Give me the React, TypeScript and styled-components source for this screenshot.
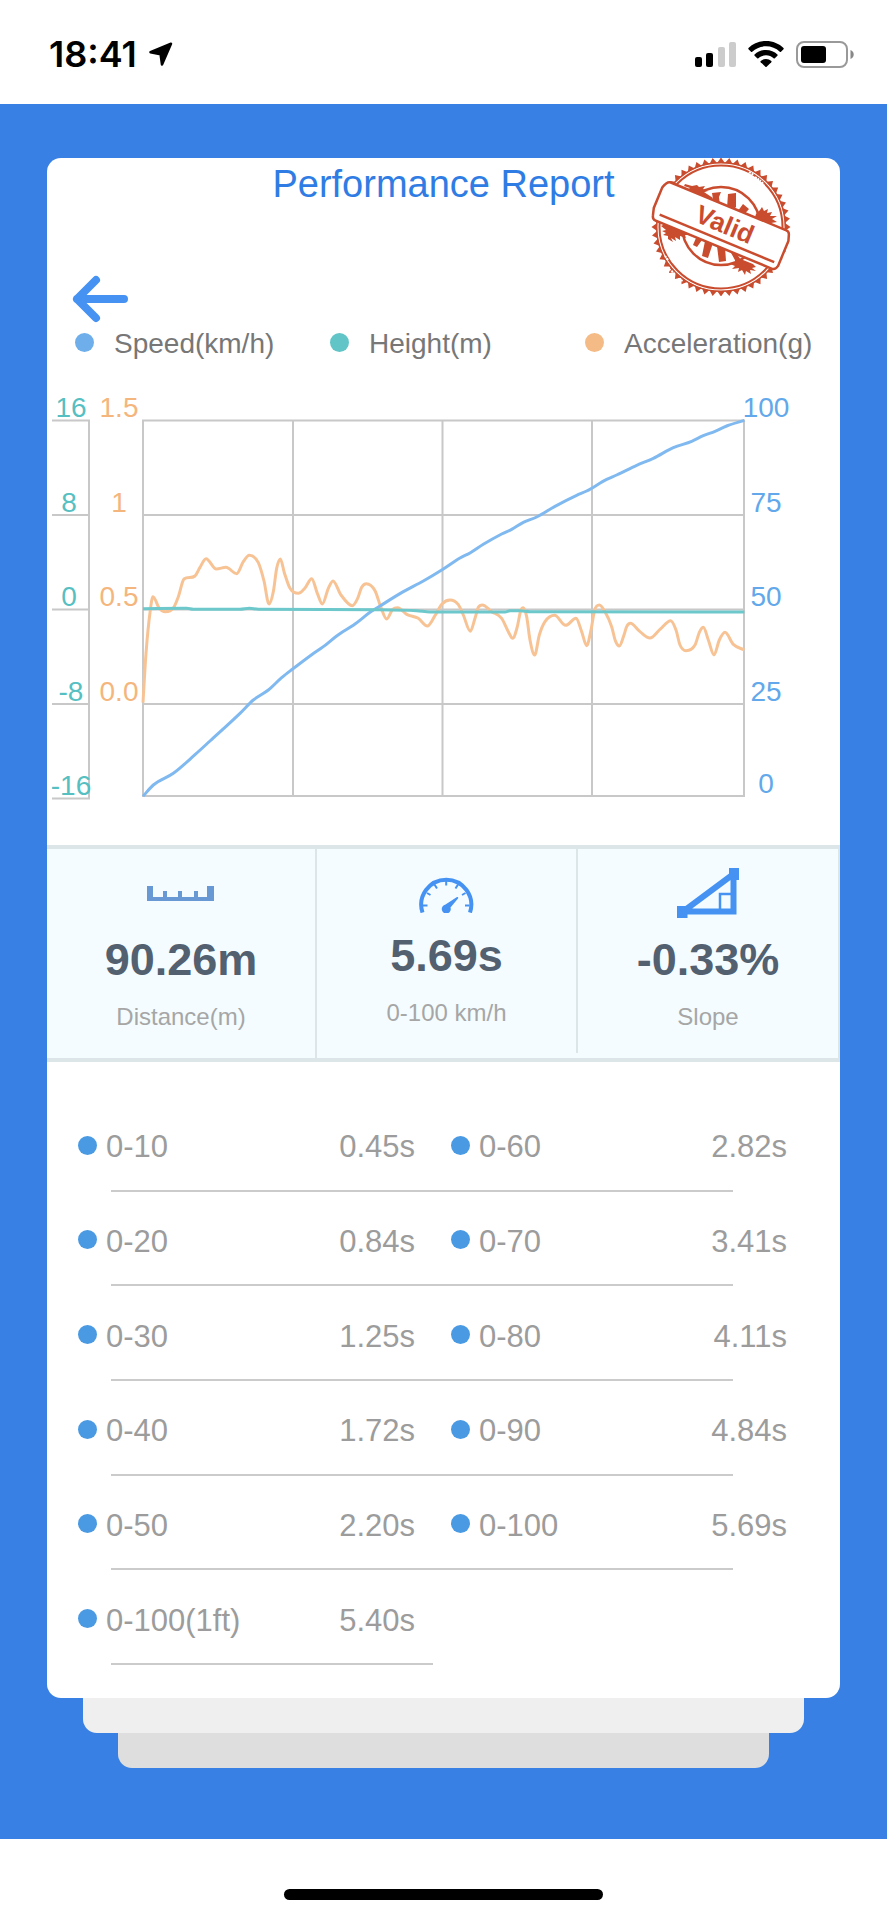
import React from "react";
import styled, { createGlobalStyle } from "styled-components";

type Point = [number, number];

type Split = { label: string; time: string };

const legend = [
  { label: "Speed(km/h)", color: "#6eaeeb" },
  { label: "Height(m)", color: "#61c4c7" },
  { label: "Acceleration(g)", color: "#f4bb86" },
];

const splits: [Split, Split | null][] = [
  [{ label: "0-10", time: "0.45s" }, { label: "0-60", time: "2.82s" }],
  [{ label: "0-20", time: "0.84s" }, { label: "0-70", time: "3.41s" }],
  [{ label: "0-30", time: "1.25s" }, { label: "0-80", time: "4.11s" }],
  [{ label: "0-40", time: "1.72s" }, { label: "0-90", time: "4.84s" }],
  [{ label: "0-50", time: "2.20s" }, { label: "0-100", time: "5.69s" }],
  [{ label: "0-100(1ft)", time: "5.40s" }, null],
];

// chart series, in units of a third of a pixel from the chart's top left
const speed: Point[] = [
  [288, 1249], [319, 1215], [379, 1180], [444, 1124], [489, 1083], [579, 1000],
  [619, 960], [664, 930], [704, 893], [737, 867], [794, 824], [829, 800],
  [869, 768], [924, 732], [969, 697], [999, 678], [1069, 635], [1129, 603],
  [1189, 567], [1239, 534], [1269, 519], [1309, 493], [1364, 462], [1394, 448],
  [1429, 427], [1469, 411], [1524, 379], [1589, 346], [1619, 333], [1679, 298],
  [1709, 285], [1769, 256], [1819, 235], [1879, 203], [1934, 184], [1969, 167],
  [2004, 154], [2039, 138], [2092, 121],
];

const height: Point[] = [
  [288, 686], [419, 685], [439, 688], [579, 688], [607, 685], [634, 688],
  [989, 689], [1109, 692], [1149, 696], [1374, 696], [1389, 692], [1419, 692],
  [1449, 695], [2092, 696],
];

const acceleration: Point[] = [
  [288, 968], [297, 820], [310, 690], [318, 650], [337, 685], [355, 695],
  [379, 684], [394, 650], [411, 597], [444, 588], [459, 562], [477, 536],
  [508, 567], [537, 562], [569, 581], [589, 545], [607, 526], [634, 548],
  [651, 603], [666, 672], [679, 635], [689, 565], [700, 537], [712, 578],
  [729, 625], [754, 640], [774, 624], [794, 596], [811, 640], [826, 672],
  [844, 625], [858, 603], [882, 645], [916, 677], [932, 655], [944, 622],
  [958, 611], [984, 632], [1001, 680], [1019, 717], [1037, 688], [1052, 683],
  [1079, 703], [1114, 715], [1141, 738], [1164, 707], [1185, 672], [1209, 660],
  [1234, 674], [1249, 705], [1270, 754], [1284, 715], [1294, 682], [1306, 675],
  [1334, 695], [1364, 715], [1384, 755], [1397, 775], [1411, 740], [1421, 692],
  [1429, 683], [1439, 710], [1449, 780], [1463, 825], [1477, 765], [1494, 725],
  [1523, 706], [1556, 736], [1587, 715], [1604, 755], [1619, 797], [1632, 750],
  [1643, 690], [1657, 675], [1674, 695], [1694, 740], [1705, 782], [1717, 798],
  [1731, 765], [1739, 740], [1750, 730], [1779, 755], [1809, 774], [1839, 748],
  [1871, 722], [1887, 750], [1899, 795], [1917, 812], [1944, 795], [1958, 755],
  [1969, 742], [1984, 780], [2001, 825], [2017, 780], [2034, 757], [2059, 793],
  [2092, 810],
];

// cubic through the points, flat at every peak and dip
const smooth = (raw: Point[]) => {
  const pts = raw.map(([x, y]) => [x / 3, y / 3]);
  const slope = (i: number) =>
    (pts[i + 1][1] - pts[i][1]) / (pts[i + 1][0] - pts[i][0]);
  const tangents = pts.map((_, i) => {
    if (i === 0) return slope(0);
    if (i === pts.length - 1) return slope(i - 1);
    const a = slope(i - 1);
    const b = slope(i);
    if (a * b <= 0) return 0;
    const limit = 3 * Math.min(Math.abs(a), Math.abs(b));
    return Math.sign(a) * Math.min(Math.abs(a + b) / 2, limit);
  });
  return pts.reduce((d, [x, y], i) => {
    if (i === 0) return `M${x} ${y}`;
    const [px, py] = pts[i - 1];
    const h = (x - px) / 3;
    return `${d}C${px + h} ${py + tangents[i - 1] * h} ${x - h} ${
      y - tangents[i] * h
    } ${x} ${y}`;
  }, "");
};

const axisRows = [37, 132, 226, 321, 415];
const heightAxis = ["16", "8", "0", "-8", "-16"];
const accelerationAxis = ["1.5", "1", "0.5", "0.0"];
const speedAxis = ["100", "75", "50", "25", "0"];

const Chart: React.FC = () => (
  <ChartSvg viewBox="0 0 793 465" role="img" aria-label="Run chart">
    <g fill="none" stroke="#c8c8c8" strokeWidth="2">
      <path d="M5 40.5H42V418.5H5M5 135H42M5 229.5H42M5 324H42" />
      <path d="M96 40.5H697V416H96ZM96 135H697M96 229.5H697M96 324H697" />
      <path d="M246 40V416M395.5 40V416M545 40V416" />
    </g>
    <g fill="none" strokeWidth="3" strokeLinejoin="round">
      <path d={smooth(acceleration)} stroke="#f7c395" />
      <path d={smooth(speed)} stroke="#7fb9f0" />
      <path d={smooth(height)} stroke="#6cc8cb" />
    </g>
    <g fontSize="28" textAnchor="middle">
      {heightAxis.map((text, i) => (
        <text key={text} x={text.length > 1 ? 24 : 22} y={axisRows[i]} fill="#56bfc2">
          {text}
        </text>
      ))}
      {accelerationAxis.map((text, i) => (
        <text key={text} x="72" y={axisRows[i]} fill="#f4b67d">
          {text}
        </text>
      ))}
      {speedAxis.map((text, i) => (
        <text key={text} x="719" y={i === 4 ? 413 : axisRows[i]} fill="#62a8ea">
          {text}
        </text>
      ))}
    </g>
  </ChartSvg>
);

const teeth = Array.from({ length: 104 }, (_, i) => {
  const r = i % 2 ? 64 : 69.5;
  const a = (i * Math.PI) / 52;
  return `${(70 + r * Math.cos(a)).toFixed(1)},${(69 + r * Math.sin(a)).toFixed(1)}`;
}).join(" ");

const ValidStamp: React.FC = () => (
  <Stamp viewBox="0 0 141 138" width="141" height="138">
    <g fill="#c94c2e" stroke="none">
      <polygon points={teeth} />
      <circle cx="70" cy="69" r="64" fill="#fff" />
      <circle cx="70" cy="69" r="61.5" fill="none" stroke="#c94c2e" strokeWidth="2" />
      <circle cx="70" cy="69" r="64.3" fill="none" stroke="#c94c2e" strokeWidth="1.5" />
      <circle cx="70" cy="68" r="39" fill="none" stroke="#c94c2e" strokeWidth="2.5" />
      {/* ink smudges on both sides of the band */}
      <path d="M34 26l7 2 5-1 2 2 6-1-2 3 5 2-4 1 9 6-4 3-11-5-3 1-2-5-6-2 3-2-6-2z" />
      <path d="M105 56l4-4 2-3 2 4 4-2-1 4 5-1-2 4 7 0-5 3 5 3-6 1 4 3-5 0 2 5-8-3-11-5z" />
      <path d="M14 66l9 4 10 4 7 3-6 0 1 3-6-2 0 4-5-3 1 4-5-3 2 4-5-3 0-3-5-1 3-2-4-2 4-1-5-4z" />
      <path d="M84 101l8 1 10 4 3 3-4 1 4 3-6-1 1 4-5-3-1 4-3-5-4 2 1-4-7 1 3-3-5-2 5-2z" />
      <path d="M61 35l9-1-2 5 1 9-5 1-2-8zM77 36l8-1 0 14-4 4-5-3zM92 46l6 5-8 9-6-3zM52 43l7-3 3 8-6 0z" />
      <path d="M45 80l6 2-5 7-4-2zM54 83l8 2-5 15-6-2zM66 88l8 1 1 14-7 1zM79 93l6 2 5 7-5 2z" />
      <path
        d="M98 14l5 3M104 19l6 4M111 24l2 4M18 111l5 4M27 121l5 2M14 98l3 4"
        stroke="#fff"
        strokeWidth="2"
        strokeDasharray="2 1"
      />
    </g>
    <g transform="translate(70 68) rotate(22.5)">
      <path
        d="M-63-21H62Q65-21 66-18L68-12V15Q67 20 63 20H-63Q-66 20-67 16L-69 9V-13Q-67-21-63-21Z"
        fill="#fff"
        stroke="#c94c2e"
        strokeWidth="2.5"
      />
      <path d="M-61 13H63" stroke="#c94c2e" strokeWidth="2.5" />
      <text x="3" y="6" fill="#c94c2e" fontSize="26" fontWeight="700" textAnchor="middle">
        Valid
      </text>
    </g>
  </Stamp>
);

const RulerIcon: React.FC = () => (
  <svg width="68" height="15" viewBox="0 0 68 15" aria-hidden="true">
    <path
      d="M0 0H6V11H16V5H20V11H31V5H35V11H47V5H51V11H60V0H67V15H0Z"
      fill="#6999d5"
    />
  </svg>
);

const GaugeIcon: React.FC = () => (
  <svg width="56" height="40" viewBox="0 -4 56 40" aria-hidden="true">
    <g fill="none" stroke="#4592f3">
      <path d="M3.5 35.5A25 25 0 1 1 51 35.5" strokeWidth="4" />
      <path
        d="M4 28.500H8.500M8 16L11.500 18M15.500 7.500L18 11.500M27.200 4V8.500M39 7.500L36.500 11.500M46.500 16L43 18M50.500 28.500H46"
        strokeWidth="2"
      />
    </g>
    <path
      d="M38 20C39.5 20 39.5 21 38.8 21.8L31.5 30.5A4.5 4.5 0 1 1 26.5 27.6Z"
      fill="#4592f3"
    />
  </svg>
);

const SlopeIcon: React.FC = () => (
  <svg width="62" height="50" viewBox="0 0 62 50" aria-hidden="true">
    <path d="M6 43.5H56.5V6Z" fill="none" stroke="#4592f3" strokeWidth="6" />
    <path d="M43 42V26H55" fill="none" stroke="#4592f3" strokeWidth="2.5" />
    <path d="M52 0H62V12H52ZM0 38H10.500V50H0Z" fill="#4592f3" />
  </svg>
);

const stats = [
  { value: "90.26m", label: "Distance(m)", icon: <RulerIcon />, compact: false },
  { value: "5.69s", label: "0-100 km/h", icon: <GaugeIcon />, compact: true },
  { value: "-0.33%", label: "Slope", icon: <SlopeIcon />, compact: false },
];

const StatusIcons: React.FC = () => (
  <StatusGroup $gap={12}>
    <svg width="41" height="26" viewBox="0 0 41 26" aria-hidden="true">
      <rect x="0" y="16" width="7" height="10" rx="2" />
      <rect x="11" y="12" width="7" height="14" rx="2" />
      <rect x="23" y="6" width="7" height="20" rx="2" fill="#ccc" />
      <rect x="34" y="1" width="7" height="25" rx="2" fill="#ccc" />
    </svg>
    <svg width="36" height="26" viewBox="0 0 36 26" aria-hidden="true">
      <path d="M18 0C25 0 31.200 2.700 35.500 7Q36 7.600 35.500 8.200L33 10.700Q32.400 11.200 31.800 10.700C28 7.200 23.300 5.300 18 5.300S8 7.200 4.200 10.700Q3.600 11.200 3 10.700L.5 8.200Q0 7.600.5 7C4.800 2.700 11 0 18 0Z" />
      <path d="M18 9C22.500 9 26.500 10.700 29.400 13.500Q30 14.100 29.400 14.700L26.800 17.200Q26.200 17.700 25.600 17.200C23.500 15.300 20.900 14.200 18 14.200S12.500 15.300 10.400 17.200Q9.800 17.700 9.200 17.200L6.600 14.700Q6 14.100 6.600 13.500C9.500 10.700 13.500 9 18 9Z" />
      <path d="M18 18C20 18 21.900 18.700 23.300 20Q23.900 20.600 23.300 21.200L18.600 25.700Q18 26.200 17.400 25.700L12.700 21.200Q12.100 20.600 12.700 20C14.100 18.700 16 18 18 18Z" />
    </svg>
    <svg width="58" height="27" viewBox="0 0 58 27" aria-hidden="true">
      <rect x="1" y="1" width="50" height="25" rx="7" fill="none" stroke="#999" strokeWidth="2" />
      <rect x="5" y="5" width="25" height="17" rx="3" />
      <path d="M54.5 9C56.5 9.8 57.7 11.5 57.7 13.5S56.5 17.2 54.5 18Z" fill="#888" />
    </svg>
  </StatusGroup>
);

const App: React.FC = () => {
  return (
    <>
      <GlobalStyle />
      <StatusBar>
        <StatusGroup $gap={12}>
          <Clock>18:41</Clock>
          <svg width="24" height="25" viewBox="0 0 24 25" aria-hidden="true">
            <path
              d="M1.5 10.2L22 1.7L13 22.500L11.600 12.300Z"
              stroke="#000"
              strokeWidth="2.5"
              strokeLinejoin="round"
            />
          </svg>
        </StatusGroup>
        <StatusIcons />
      </StatusBar>
      <Page>
        <Card>
          <Title>Performance Report</Title>
          <ValidStamp />
          <BackButton type="button" aria-label="Back">
            <svg width="58" height="48" viewBox="0 0 58 48" aria-hidden="true">
              <path
                d="M53 24H6M25 5L6 24L25 43"
                fill="none"
                stroke="#4592f3"
                strokeWidth="8"
                strokeLinecap="round"
                strokeLinejoin="round"
              />
            </svg>
          </BackButton>
          <Legend>
            {legend.map((item) => (
              <LegendItem key={item.label}>
                <Dot $color={item.color} />
                {item.label}
              </LegendItem>
            ))}
          </Legend>
          <Chart />
          <Stats>
            {stats.map((stat) => (
              <Stat key={stat.label} $compact={stat.compact}>
                <StatIcon>{stat.icon}</StatIcon>
                <StatValue>{stat.value}</StatValue>
                <StatLabel>{stat.label}</StatLabel>
              </Stat>
            ))}
          </Stats>
          <SplitTable>
            <tbody>
              {splits.map(([left, right]) => (
                <tr key={left.label}>
                  <LabelCell scope="row" $line="inset">
                    <SplitLabel>
                      <Dot $color="#4a9ae3" />
                      {left.label}
                    </SplitLabel>
                  </LabelCell>
                  <TimeCell $line="full">{left.time}</TimeCell>
                  {right && (
                    <>
                      <LabelCell scope="row" $line="full">
                        <SplitLabel>
                          <Dot $color="#4a9ae3" />
                          {right.label}
                        </SplitLabel>
                      </LabelCell>
                      <TimeCell $line="short">{right.time}</TimeCell>
                    </>
                  )}
                </tr>
              ))}
            </tbody>
          </SplitTable>
        </Card>
        <CardEdge $inset={36} $color="#efefef" />
        <CardEdge $inset={71} $color="#dedede" />
      </Page>
      <HomeBar>
        <HomeIndicator />
      </HomeBar>
    </>
  );
};

const GlobalStyle = createGlobalStyle`
  * {
    box-sizing: border-box;
  }
  body {
    margin: 0;
    background: #fff;
    font-family: "Liberation Sans", Arial, sans-serif;
  }
  svg {
    display: block;
  }
`;

const StatusBar = styled.header`
  display: flex;
  align-items: center;
  justify-content: space-between;
  height: 104px;
  padding: 4px 33px 0 49px;
`;

const StatusGroup = styled.div<{ $gap: number }>`
  display: flex;
  align-items: center;
  gap: ${({ $gap }) => $gap}px;
`;

const Clock = styled.span`
  font-family: Inter, sans-serif;
  font-weight: 600;
  font-size: 36px;
  line-height: 40px;
`;

const Page = styled.main`
  padding: 54px 47px 71px;
  background: #3880e3;
`;

const Card = styled.section`
  position: relative;
  padding: 3px 0 33px;
  border-radius: 14px;
  background: #fff;
`;

const CardEdge = styled.div<{ $inset: number; $color: string }>`
  height: 35px;
  margin: 0 ${({ $inset }) => $inset}px;
  border-radius: 0 0 14px 14px;
  background: ${({ $color }) => $color};
`;

const Title = styled.h1`
  margin: 0;
  color: #2f7de4;
  font-weight: 400;
  font-size: 38px;
  line-height: 46px;
  text-align: center;
`;

const Stamp = styled.svg`
  position: absolute;
  top: 0;
  right: 48px;
`;

const BackButton = styled.button`
  display: block;
  margin: 68px 0 5px 24px;
  padding: 0;
  border: none;
  background: none;
  cursor: pointer;
`;

const Legend = styled.ul`
  display: grid;
  grid-template-columns: repeat(3, 1fr);
  margin: 0 0 20px;
  padding: 0 0 0 28px;
  list-style: none;
`;

const LegendItem = styled.li`
  display: flex;
  align-items: center;
  gap: 20px;
  color: #777;
  font-size: 28px;
  line-height: 32px;
`;

const Dot = styled.span<{ $color: string }>`
  flex: none;
  width: 19px;
  height: 19px;
  margin-bottom: 4px;
  border-radius: 50%;
  background: ${({ $color }) => $color};
`;

const ChartSvg = styled.svg`
  width: 100%;
  height: auto;
`;

const Stats = styled.div`
  display: grid;
  grid-template-columns: 270fr 261fr 262fr;
  border: solid #dce5e7;
  border-width: 4px 0;
  background: #f4fcff;
`;

const Stat = styled.div<{ $compact: boolean }>`
  display: flex;
  flex-direction: column;
  align-items: center;
  margin-bottom: ${({ $compact }) => ($compact ? 5 : 0)}px;
  padding: ${({ $compact }) => ($compact ? "19px 0 26px" : "19px 0 27px")};
  border-right: 2px solid #dce5e7;

  & > :first-child {
    margin-bottom: ${({ $compact }) => ($compact ? 12 : 16)}px;
  }
`;

const StatIcon = styled.div`
  display: flex;
  align-items: center;
  height: 50px;
`;

const StatValue = styled.strong`
  color: #53606f;
  font-size: 45px;
  line-height: 52px;
`;

const StatLabel = styled.span`
  margin-top: 17px;
  color: #a6a6a6;
  font-size: 24px;
  line-height: 28px;
`;

const SplitTable = styled.table`
  width: calc(100% - 83px);
  height: 568px;
  margin: 35px 52px 0 31px;
  border-collapse: collapse;
  table-layout: fixed;
  color: #9c9c9c;
  font-size: 31px;
  line-height: 36px;
`;

type Line = "inset" | "full" | "short";

// rule under a cell; the outer cells leave a part of it free
const lineWidth: Record<Line, string> = {
  inset: "calc(100% - 33px)",
  full: "100%",
  short: "calc(100% - 55px)",
};

const LabelCell = styled.th<{ $line: Line }>`
  padding: 6px 0 0 ${({ $line }) => ($line === "full" ? 18 : 0)}px;
  background: linear-gradient(#cbcbcb, #cbcbcb) right bottom /
    ${({ $line }) => lineWidth[$line]} 2px no-repeat;
  font-weight: 400;
  text-align: left;
`;

const TimeCell = styled.td<{ $line: Line }>`
  width: 154px;
  padding: 6px ${({ $line }) => ($line === "full" ? 18 : 1)}px 0 0;
  background: linear-gradient(#cbcbcb, #cbcbcb) left bottom /
    ${({ $line }) => lineWidth[$line]} 2px no-repeat;
  text-align: right;
`;

const SplitLabel = styled.span`
  display: flex;
  align-items: center;
  gap: 9px;
`;

const HomeBar = styled.footer`
  display: flex;
  justify-content: center;
  height: 80px;
  padding-top: 50px;
`;

const HomeIndicator = styled.div`
  width: 36%;
  height: 11px;
  border-radius: 6px;
  background: #000;
`;

export default App;
